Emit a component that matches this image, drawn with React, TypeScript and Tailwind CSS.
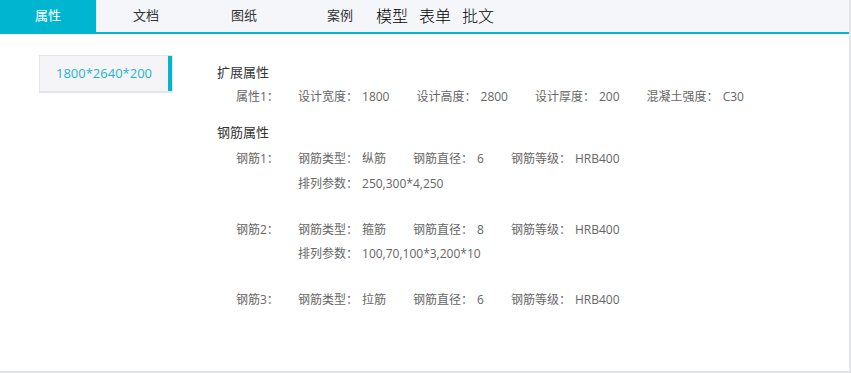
import React from "react";

const font = { fontFamily: '"Open Sans", "Noto Sans CJK SC", sans-serif' };

function Item({ label, value }: { label: string; value: string }) {
  return (
    <span className="mr-[27px] whitespace-nowrap">
      {label}：<span className="ml-[4px]">{value}</span>
    </span>
  );
}

function Row({ label, children, className = "" }: { label?: string; children: React.ReactNode; className?: string }) {
  return (
    <div className={`flex h-[20px] items-center text-[12px] text-[#666] ${className}`}>
      <span className="ml-[19px] w-[62px] shrink-0 whitespace-nowrap">{label ? `${label}：` : ""}</span>
      <div className="flex items-center">{children}</div>
    </div>
  );
}

export default function App() {
  return (
    <div className="h-[373px] w-[851px] bg-white" style={font}>
      <div className="h-[373px] w-[851px] border-b-2 border-r-2 border-[#e3e4e8] bg-white">
        <div className="flex h-[34px] items-stretch border-b-2 border-[#00b5cf] bg-[#f5f6fa]">
          <div className="flex w-[96px] items-center justify-center bg-[#00b5cf] text-[13px] text-white">属性</div>
          <div className="w-[1px] bg-[#e8e9ee]" />
          <div className="flex w-[98px] items-center justify-center text-[13px] text-[#333]">文档</div>
          <div className="flex w-[98px] items-center justify-center text-[13px] text-[#333]">图纸</div>
          <div className="flex items-center pl-[34px] text-[13px] text-[#333]">案例</div>
          <div className="ml-[23px] flex items-center gap-[11px] text-[16px] font-light text-black">
            <span>模型</span>
            <span>表单</span>
            <span>批文</span>
          </div>
        </div>
        <div className="flex">
          <div className="w-[217px] shrink-0 pl-[39px] pt-[21px]">
            <div className="flex h-[38px] w-[134px] border border-b-2 border-[#e3e4e8] bg-[#f5f5f7]">
              <div className="flex flex-1 items-center justify-center text-[13px] text-[#1fb3d3]">1800*2640*200</div>
              <div className="w-[4px] bg-[#00b5cf]" />
            </div>
          </div>
          <div className="flex flex-col pt-[29px]">
            <div className="flex h-[20px] items-center text-[13px] text-[#333]">扩展属性</div>
            <Row label="属性1" className="mt-[4px]">
              <Item label="设计宽度" value="1800" />
              <Item label="设计高度" value="2800" />
              <Item label="设计厚度" value="200" />
              <Item label="混凝土强度" value="C30" />
            </Row>
            <div className="mt-[16px] flex h-[20px] items-center text-[13px] text-[#333]">钢筋属性</div>
            <Row label="钢筋1" className="mt-[6px]">
              <Item label="钢筋类型" value="纵筋" />
              <Item label="钢筋直径" value="6" />
              <Item label="钢筋等级" value="HRB400" />
            </Row>
            <Row className="mt-[5px]">
              <Item label="排列参数" value="250,300*4,250" />
            </Row>
            <Row label="钢筋2" className="mt-[26px]">
              <Item label="钢筋类型" value="箍筋" />
              <Item label="钢筋直径" value="8" />
              <Item label="钢筋等级" value="HRB400" />
            </Row>
            <Row className="mt-[4px]">
              <Item label="排列参数" value="100,70,100*3,200*10" />
            </Row>
            <Row label="钢筋3" className="mt-[26px]">
              <Item label="钢筋类型" value="拉筋" />
              <Item label="钢筋直径" value="6" />
              <Item label="钢筋等级" value="HRB400" />
            </Row>
          </div>
        </div>
      </div>
    </div>
  );
}
